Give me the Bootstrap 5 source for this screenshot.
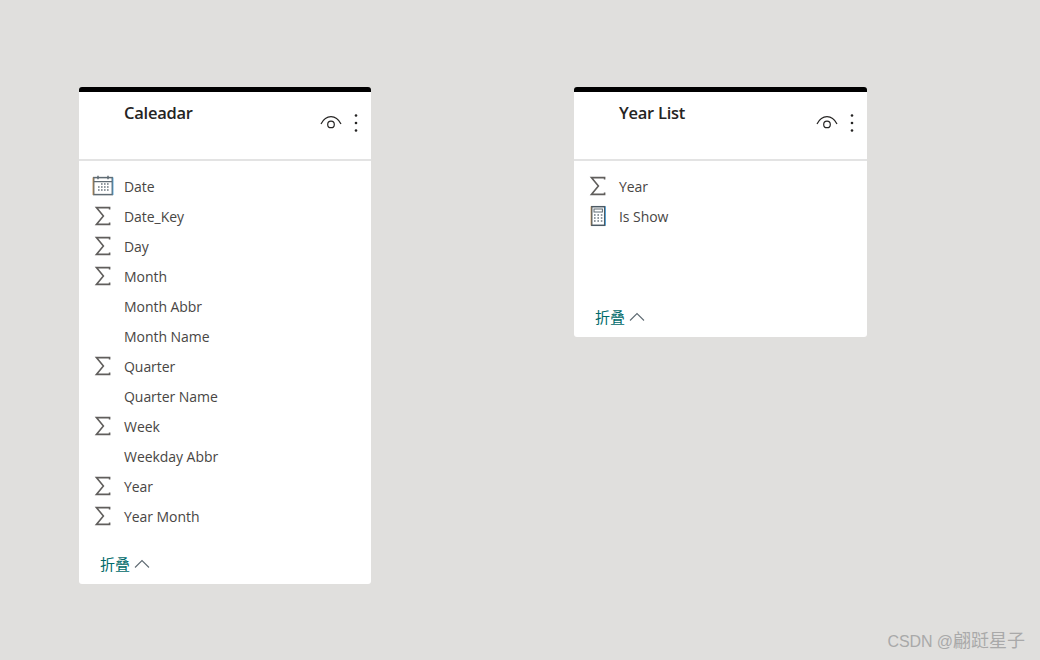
<!DOCTYPE html>
<html lang="zh">
<head>
<meta charset="utf-8">
<title>Model</title>
<link rel="stylesheet" href="https://cdn.jsdelivr.net/npm/bootstrap@5.3.0/dist/css/bootstrap.min.css">
<style>
html,body{height:660px;overflow:hidden}
body{background:#e0dfdd;font-family:"Open Sans","Noto Sans CJK SC",sans-serif;color:#444;position:relative}
.canvas-wrap{padding:87px 0 0 79px;gap:203px}
.tbl{background:#fff;border-top:5px solid #000;border-radius:3px;overflow:hidden}
.tbl-a{width:292px;height:497px}
.tbl-b{width:293px;height:250px}
.tbl-head{height:69px;flex:none;border-bottom:2px solid #e3e3e3;padding-left:45px;padding-right:13px}
.tbl-title{font-family:"Open Sans","Noto Sans CJK SC",sans-serif;font-size:16.5px;font-weight:600;color:#252423;line-height:22px;margin:10px 0 0;letter-spacing:-.25px}
.tbl-tools{margin-top:21px;gap:12px}
.tbl-rows{padding:11px 0 0;margin:0;list-style:none}
.tbl-row{height:30px;font-size:14px;padding-left:45px;position:relative;line-height:30px;letter-spacing:-.05px;color:#484644}
.ico{position:absolute;left:12px;top:2px;width:24px;height:24px}
.tbl-foot{padding-left:21px;padding-bottom:10px;font-size:15px;line-height:20px;color:#006a6a;gap:4px}
.wm{position:absolute;right:15px;top:629px;font-size:16px;line-height:24px;color:#a9a9a9;font-family:"Liberation Sans","Noto Sans CJK SC",sans-serif;letter-spacing:-.1px}
.wm-cjk{font-size:18px;letter-spacing:0}
</style>
</head>
<body>
<svg width="0" height="0" class="position-absolute">
  <symbol id="sig" viewBox="0 0 24 24"><path d="M18.6 5.5V3.6H5.4l7 8.4-7 8.4h13.2V18.5" fill="none" stroke="#605e5c" stroke-width="1.6"/></symbol>
  <symbol id="cal" viewBox="0 0 24 24">
    <rect x="2.7" y="3.6" width="18.6" height="17" fill="none" stroke="#5f6b73" stroke-width="1.5"/>
    <path d="M3 7.6h18" stroke="#5f6b73" stroke-width="1.2"/>
    <path d="M7 1.7v3.6M17 1.7v3.6" stroke="#5f6b73" stroke-width="1.5"/>
    <path d="M2 3.5v17.5" stroke="#c98a3c" stroke-width=".8"/><path d="M22 3.5v17.5" stroke="#4aa3e0" stroke-width=".8"/>
    <path d="M10 10h1.6M13 10h1.6M16 10h1.6M7 13h1.6M10 13h1.6M13 13h1.6M16 13h1.6M7 16h1.6M10 16h1.6M13 16h1.6M16 16h1.6" stroke="#6d7880" stroke-width="1.4"/>
  </symbol>
  <symbol id="calc" viewBox="0 0 24 24">
    <rect x="5.7" y="2.7" width="13" height="18.6" fill="none" stroke="#4c5a64" stroke-width="1.5"/>
    <path d="M5 2.5v19" stroke="#c98a3c" stroke-width=".6"/><path d="M19.5 2.5v19" stroke="#3f9ddc" stroke-width=".8"/>
    <rect x="8" y="5" width="8.4" height="3" fill="none" stroke="#5f6b73"/>
    <path d="M8 11h1.6M11.4 11h1.6M14.8 11h1.6M8 14h1.6M11.4 14h1.6M14.8 14h1.6M8 17h1.6M11.4 17h1.6M14.8 17h1.6" stroke="#6d7880" stroke-width="1.4"/>
  </symbol>
  <symbol id="eye" viewBox="0 0 22 14"><path d="M1 8C3.6 3 7 .7 11 .7s7.4 2.3 10 7.3" fill="none" stroke="#252423" stroke-width="1.2"/><circle cx="11" cy="8.4" r="3.3" fill="none" stroke="#252423" stroke-width="1.2"/></symbol>
  <symbol id="dots" viewBox="0 0 4 20"><circle cx="2" cy="2.5" r="1.3" fill="#252423"/><circle cx="2" cy="10" r="1.3" fill="#252423"/><circle cx="2" cy="17.5" r="1.3" fill="#252423"/></symbol>
  <symbol id="chev" viewBox="0 0 16 10"><path d="M1 8.5 8 1.5l7 7" fill="none" stroke="#5f6b73" stroke-width="1.1"/></symbol>
</svg>

<main class="d-flex align-items-start canvas-wrap">
  <section class="tbl tbl-a d-flex flex-column">
    <header class="tbl-head d-flex justify-content-between align-items-start">
      <h2 class="tbl-title">Caleadar</h2>
      <div class="tbl-tools d-flex align-items-center">
        <svg width="22" height="14"><use href="#eye"/></svg>
        <svg width="4" height="20"><use href="#dots"/></svg>
      </div>
    </header>
    <ul class="tbl-rows">
      <li class="tbl-row"><svg class="ico"><use href="#cal"/></svg>Date</li>
      <li class="tbl-row"><svg class="ico"><use href="#sig"/></svg>Date_Key</li>
      <li class="tbl-row"><svg class="ico"><use href="#sig"/></svg>Day</li>
      <li class="tbl-row"><svg class="ico"><use href="#sig"/></svg>Month</li>
      <li class="tbl-row">Month Abbr</li>
      <li class="tbl-row">Month Name</li>
      <li class="tbl-row"><svg class="ico"><use href="#sig"/></svg>Quarter</li>
      <li class="tbl-row">Quarter Name</li>
      <li class="tbl-row"><svg class="ico"><use href="#sig"/></svg>Week</li>
      <li class="tbl-row">Weekday Abbr</li>
      <li class="tbl-row"><svg class="ico"><use href="#sig"/></svg>Year</li>
      <li class="tbl-row"><svg class="ico"><use href="#sig"/></svg>Year Month</li>
    </ul>
    <div class="tbl-foot d-flex align-items-center mt-auto">折叠 <svg width="16" height="10"><use href="#chev"/></svg></div>
  </section>
  <section class="tbl tbl-b d-flex flex-column">
    <header class="tbl-head d-flex justify-content-between align-items-start">
      <h2 class="tbl-title">Year List</h2>
      <div class="tbl-tools d-flex align-items-center">
        <svg width="22" height="14"><use href="#eye"/></svg>
        <svg width="4" height="20"><use href="#dots"/></svg>
      </div>
    </header>
    <ul class="tbl-rows">
      <li class="tbl-row"><svg class="ico"><use href="#sig"/></svg>Year</li>
      <li class="tbl-row"><svg class="ico"><use href="#calc"/></svg>Is Show</li>
    </ul>
    <div class="tbl-foot d-flex align-items-center mt-auto">折叠 <svg width="16" height="10"><use href="#chev"/></svg></div>
  </section>
</main>
<div class="wm">CSDN @<span class="wm-cjk">翩跹星子</span></div>
<script src="https://cdn.jsdelivr.net/npm/bootstrap@5.3.0/dist/js/bootstrap.bundle.min.js"></script>
</body>
</html>
